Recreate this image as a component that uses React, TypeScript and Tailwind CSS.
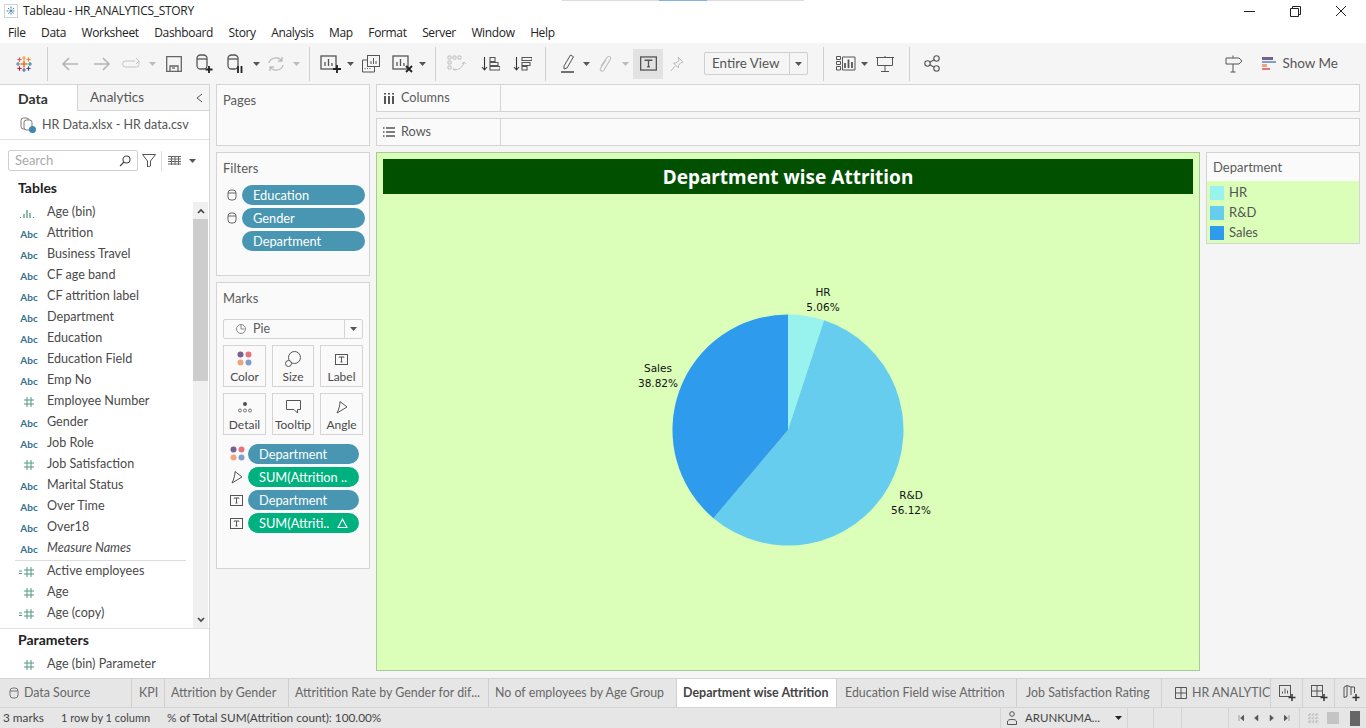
import React from "react";

const S = ({ w = 24, h = 24, vb, c = "#555", sw = 1.3, children, className = "" }: any) => (
  <svg width={w} height={h} viewBox={vb || `0 0 ${w} ${h}`} fill="none" stroke={c} strokeWidth={sw} className={"shrink-0 " + className}>
    {children}
  </svg>
);

const Caret = ({ c = "#555" }: { c?: string }) => (
  <svg width="7" height="4" viewBox="0 0 7 4" className="shrink-0"><path d="M0 0h7L3.5 4z" fill={c} /></svg>
);

const Cross = ({ x, y, r, c, t = 1.2 }: any) => (
  <path d={`M${x - r} ${y}H${x + r}M${x} ${y - r}V${y + r}`} stroke={c} strokeWidth={t} fill="none" />
);

const TabLogo = ({ size = 18 }: { size?: number }) => (
  <svg width={size} height={size} viewBox="0 0 18 18" className="shrink-0">
    <Cross x={9} y={9} r={3.5} c="#e8762b" t={1.6} />
    <Cross x={9} y={3} r={2} c="#e8a33b" />
    <Cross x={9} y={15} r={2} c="#4a6fa5" />
    <Cross x={3} y={9} r={2} c="#59879b" />
    <Cross x={15} y={9} r={2} c="#2d8ca8" />
    <Cross x={4.5} y={4.5} r={2.2} c="#e15759" />
    <Cross x={13.5} y={4.5} r={2.2} c="#eb912b" />
    <Cross x={4.5} y={13.5} r={2.2} c="#c72035" />
    <Cross x={13.5} y={13.5} r={2.2} c="#5b4a8b" />
  </svg>
);

const Cyl = ({ c = "#666" }: { c?: string }) => (
  <svg width="10" height="12" viewBox="0 0 10 12" fill="none" stroke={c} strokeWidth="1" className="shrink-0">
    <rect x="1" y="1" width="8" height="10" rx="3" />
    <path d="M1 4h8" />
  </svg>
);

const Hash = ({ eq = false }: { eq?: boolean }) => (
  <svg width="20" height="12" viewBox="0 0 20 12" fill="none" stroke="#4f9a84" strokeWidth="1" className="shrink-0">
    {eq && <path d="M1 5h3M1 7.5h3" />}
    <path d="M9 1v10M13 1v10M6 4h10M6 8h10" />
  </svg>
);

const Abc = () => (
  <span className="w-[22px] text-[10px] font-bold leading-none text-[#33718c] text-center shrink-0">Abc</span>
);

const BarsIcon = () => (
  <svg width="18" height="12" viewBox="0 0 18 12" fill="none" stroke="#4f9a84" strokeWidth="1.3" className="shrink-0">
    <path d="M2.5 10v1M6 7v4M9 3v8M12 6v5M15.5 10v1" />
  </svg>
);

type F = { n: string; t: "abc" | "hash" | "eq" | "bin"; i?: boolean };
const fields: F[] = [
  { n: "Age (bin)", t: "bin" },
  { n: "Attrition", t: "abc" },
  { n: "Business Travel", t: "abc" },
  { n: "CF age band", t: "abc" },
  { n: "CF attrition label", t: "abc" },
  { n: "Department", t: "abc" },
  { n: "Education", t: "abc" },
  { n: "Education Field", t: "abc" },
  { n: "Emp No", t: "abc" },
  { n: "Employee Number", t: "hash" },
  { n: "Gender", t: "abc" },
  { n: "Job Role", t: "abc" },
  { n: "Job Satisfaction", t: "hash" },
  { n: "Marital Status", t: "abc" },
  { n: "Over Time", t: "abc" },
  { n: "Over18", t: "abc" },
  { n: "Measure Names", t: "abc", i: true },
];
const measures: F[] = [
  { n: "Active employees", t: "eq" },
  { n: "Age", t: "hash" },
  { n: "Age (copy)", t: "eq" },
];

const FieldRow = ({ f }: { f: F }) => (
  <div className="h-[21px] flex items-center text-[12.6px] text-[#4a4a4a]">
    <div className="w-[47px] pl-[18px] flex items-center shrink-0">
      {f.t === "abc" && <Abc />}
      {f.t === "bin" && <BarsIcon />}
      {f.t === "hash" && <Hash />}
      {f.t === "eq" && <Hash eq />}
    </div>
    <span className={f.i ? "italic" : ""}>{f.n}</span>
  </div>
);

const Dots = () => (
  <svg width="16" height="16" viewBox="0 0 16 16" className="shrink-0">
    <circle cx="3.5" cy="3.5" r="3" fill="#75608f" />
    <circle cx="11.5" cy="3.5" r="3" fill="#e8717f" />
    <circle cx="3.5" cy="11.5" r="3" fill="#f2a37c" />
    <circle cx="11.5" cy="11.5" r="3" fill="#7e9fc9" />
  </svg>
);

const TBox = ({ w = 13, h = 11 }: { w?: number; h?: number }) => (
  <svg width={w} height={h} viewBox="0 0 13 11" fill="none" stroke="#555" strokeWidth="1" className="shrink-0">
    <rect x="0.5" y="0.5" width="12" height="10" />
    <path d="M4 3.5V3h5v.5M6.5 3v5M5.5 8h2" />
  </svg>
);

const AngleIcon = () => (
  <svg width="12" height="14" viewBox="0 0 12 14" fill="none" stroke="#555" strokeWidth="1" className="shrink-0">
    <path d="M1 13C3 9 4 5 4 1.500L11 7z" />
  </svg>
);

const MarkBtn = ({ w, label, icon }: any) => (
  <div className={"h-[42px] border border-[#d4d4d4] bg-[#fafafa] flex flex-col items-center justify-between pt-[5px] pb-[2px] text-[12px] leading-[14px] text-[#4a4a4a] " + w}>
    <div className="h-[16px] flex items-center">{icon}</div>
    <span>{label}</span>
  </div>
);

const Pill = ({ children, green = false, w }: any) => (
  <div className={"h-[20px] rounded-full flex items-center pl-[11px] text-[12.8px] text-white shrink-0 " + w + (green ? " bg-[#00b180]" : " bg-[#4996b2]")}>
    {children}
  </div>
);

const Sep = ({ cls }: { cls: string }) => <div className={"w-px h-[34px] bg-[#cfcfcf] shrink-0 " + cls} />;

const Cell = ({ cls, children }: any) => (
  <div className={"h-[30px] flex items-center justify-center shrink-0 " + cls}>{children}</div>
);

const Tab = ({ w, children }: any) => (
  <div className={"h-full flex items-center whitespace-nowrap overflow-hidden shrink-0 border-r border-[#cfcfcf] pl-[6px] text-[#666] " + w}>
    {children}
  </div>
);

const SheetPlus = ({ kind }: { kind: number }) => (
  <svg width="18" height="18" viewBox="0 0 18 18" fill="none" stroke="#555" strokeWidth="1">
    {kind === 0 && <><rect x="1.5" y="1.5" width="11" height="11" /><path d="M4.5 9.5v-2M7 9.5v-5M9.5 9.5v-3" /></>}
    {kind === 1 && <><rect x="1.5" y="1.5" width="11" height="11" /><path d="M7 1.5v11M1.5 7h11" /></>}
    {kind === 2 && <path d="M2 3l3-1.5v11l-3 1zM5 1.5l4 1.5h3.5v6M9 3v8" />}
    <path d="M14 10v7M10.5 13.5h7" strokeWidth="1.5" stroke="#333" />
  </svg>
);

const ShelfRow = ({ label, icon }: any) => (
  <div className="h-[28px] bg-[#fafafa] border border-[#d4d4d4] flex">
    <div className="w-[124px] border-r border-[#d4d4d4] flex items-center pl-[6px] gap-[6px] text-[12.7px] text-[#5a5a5a]">
      {icon}
      <span>{label}</span>
    </div>
  </div>
);

export default function App() {
  return (
    <div className="relative w-[1366px] h-[728px] overflow-hidden flex flex-col bg-[#f5f5f5] font-['Lato','Liberation_Sans',sans-serif]">
      <div className="absolute top-0 left-[562px] w-[242px] h-px bg-[#dcdcdc]">
        <div className="ml-[97px] w-[48px] h-px bg-[#7fb2e5]" />
      </div>

      {/* title bar */}
      <div className="h-[22px] bg-white flex items-center shrink-0 pl-[4px] font-['Open_Sans',sans-serif] text-[12px] text-[#222]">
        <svg width="14" height="14" viewBox="0 0 14 14" fill="none" stroke="#3f7f9f" strokeWidth="1" className="shrink-0">
          <rect x="0.5" y="0.5" width="13" height="13" stroke="#c9d6de" />
          <path d="M7 2.5v9M2.5 7h9M4 4l6 6M10 4l-6 6" strokeDasharray="2 1" />
        </svg>
        <span className="ml-[5px] tracking-[-0.3px]">Tableau - HR_ANALYTICS_STORY</span>
        <div className="ml-auto mr-[2px] flex items-center">
          <div className="w-[46px] flex justify-center"><S w={11} h={11} c="#222" sw={1}><path d="M0 5.5h11" /></S></div>
          <div className="w-[46px] flex justify-center">
            <S w={11} h={11} c="#222" sw={1}><path d="M.5 2.5h8v8h-8zM2.5 2.5v-2h8v8h-2" /></S>
          </div>
          <div className="w-[46px] flex justify-center">
            <S w={12} h={12} c="#222" sw={1}><path d="M1 1l10 10M11 1L1 11" /></S>
          </div>
        </div>
      </div>

      {/* menu */}
      <div className="h-[21px] bg-white flex items-center shrink-0 pl-[8px] gap-[15.5px] tracking-[-0.35px] font-['Open_Sans',sans-serif] text-[12px] text-[#222]">
        {["File", "Data", "Worksheet", "Dashboard", "Story", "Analysis", "Map", "Format", "Server", "Window", "Help"].map((m) => (
          <span key={m}>{m}</span>
        ))}
      </div>

      {/* toolbar */}
      <div className="h-[41px] shrink-0 flex items-center pl-[8px] bg-[#f5f5f5]">
        <Cell cls="w-[32px]"><TabLogo /></Cell>
        <Sep cls="ml-[7px] mr-[6px]" />
        <Cell cls="w-[32px]"><S w={18} h={14} c="#b5b5b5" sw={1.6}><path d="M17 7H2M8 1L2 7l6 6" /></S></Cell>
        <Cell cls="w-[32px]"><S w={18} h={14} c="#b5b5b5" sw={1.6}><path d="M1 7h15M10 1l6 6-6 6" /></S></Cell>
        <Cell cls="w-[28px]"><S w={20} h={12} c="#c4c4c4" sw={1}><path d="M13 3H3.500a2.500 2.500 0 0 0 0 6h11a2.500 2.500 0 0 0 2.500-2.500V3M14 0l3 3-3 3" /></S></Cell>
        <Cell cls="w-[12px]"><Caret c="#bbb" /></Cell>
        <Cell cls="w-[32px]"><S w={16} h={16} c="#666"><path d="M.7.7h14.600v14.600H.7zM4 15v-5h8v5" /><path d="M6 12h3" /></S></Cell>
        <Cell cls="w-[30px]"><S w={18} h={20}><rect x="1" y="1" width="10" height="14" rx="3.500" /><path d="M1 5h10" /><path d="M13 12v7M9.500 15.500h7" stroke="#222" strokeWidth="1.800" /></S></Cell>
        <Cell cls="w-[32px]"><S w={18} h={20}><rect x="1" y="1" width="10" height="14" rx="3.500" /><path d="M1 5h10" /><path d="M11 12v7M14.500 12v7" stroke="#222" strokeWidth="1.800" /></S></Cell>
        <Cell cls="w-[8px]"><Caret /></Cell>
        <Cell cls="w-[32px]"><S w={18} h={16} c="#bbb" sw={1.3}><path d="M2 7a7 6 0 0 1 13-2M16 9A7 6 0 0 1 3 11M15 1v4h-4M3 15v-4h4" /></S></Cell>
        <Cell cls="w-[8px]"><Caret c="#bbb" /></Cell>
        <Sep cls="ml-[9px]" />
        <Cell cls="ml-[5px] w-[32px]"><S w={22} h={20}><rect x="1" y="2" width="15" height="13" /><path d="M5 12V8M8.500 12V5M12 12V9" /><path d="M17 11v8M13 15h8" stroke="#222" strokeWidth="1.800" /></S></Cell>
        <Cell cls="w-[6px]"><Caret /></Cell>
        <Cell cls="ml-[2px] w-[32px]"><S w={18} h={18} sw={1}><rect x="5.500" y=".5" width="12" height="11" /><path d="M9 9V6M11.500 9V3M14 9V6" /><path d="M5.500 5h-5v12h12v-5" /><path d="M3 14v-1M5.500 14v-1M8 14v-1" /></S></Cell>
        <Cell cls="w-[32px]"><S w={22} h={20}><rect x="1" y="2" width="15" height="13" /><path d="M5 12V8M8.500 12V5M12 12V9" /><path d="M14 12l6 6M20 12l-6 6" stroke="#222" strokeWidth="1.800" /></S></Cell>
        <Cell cls="w-[6px]"><Caret /></Cell>
        <Sep cls="ml-[10px]" />
        <Cell cls="ml-[5px] w-[32px]"><S w={20} h={18} c="#c0c0c0" sw={1}><path d="M1 1h3v3H1zM6 1h3v3H6zM11 1h3v3h-3zM1 6h3v3H1zM1 11h3v3H1zM7 15c5 0 9-3 10-8M15 9l2-2 2 2M6 13l1 2 2-1" /></S></Cell>
        <Cell cls="ml-[1px] w-[32px]"><S w={19} h={16} sw={1.100}><path d="M3.500 1v13M1 11l2.500 3L6 11" stroke="#333" /><path d="M9 1.500h5v4H9zM9 6.500h8v3H9zM9 10.500h10v3.500H9z" /></S></Cell>
        <Cell cls="w-[32px]"><S w={19} h={16} sw={1.100}><path d="M3.500 1v13M1 11l2.500 3L6 11" stroke="#333" /><path d="M9 1.500h10v3H9zM9 6.500h8v3H9zM9 10.500h5v3.500H9z" /></S></Cell>
        <Sep cls="ml-[7px]" />
        <Cell cls="ml-[7px] w-[30px]"><S w={14} h={19} sw={1}><path d="M3 12L9.500 1l3 1.800L6 14l-3 1z" /><path d="M0 18h13" stroke="#444" strokeWidth="1.500" /></S></Cell>
        <Cell cls="w-[6px]"><Caret /></Cell>
        <Cell cls="w-[32px]"><S w={14} h={18} c="#c0c0c0" sw={1.200}><path d="M3 11l6-8.500c1.500-2 4.500-.5 3.500 1.500L6 15c-1.500 2-4.500 1-3.500-1.500L8 5" /></S></Cell>
        <Cell cls="w-[8px]"><Caret c="#bbb" /></Cell>
        <Cell cls="ml-[4px] w-[30px] bg-[#e2e2e2]"><TBox w={17} h={15} /></Cell>
        <Cell cls="w-[28px]"><S w={14} h={16} c="#bbb" sw={1}><path d="M8 1l5 5-2 .5-2.500 3 0 2.500L3.500 7H6l3-2.500zM5.500 9.500L1 15" /></S></Cell>
        <div className="ml-[13px] w-[104px] h-[23px] shrink-0 rounded-[2px] border border-[#cfcfcf] flex items-center text-[13.4px] text-[#555]">
          <span className="w-[85px] pl-[7px] border-r border-[#cfcfcf] h-full flex items-center">Entire View</span>
          <span className="flex-1 flex justify-center"><Caret /></span>
        </div>
        <Sep cls="ml-[15px]" />
        <Cell cls="ml-[7px] w-[30px]"><S w={20} h={15} sw={1}><path d="M.5.500h4v3h-4zM.5 5.500h4v3h-4zM.5 10.500h4v3.500h-4zM6.500 1h12.500v13H6.500z" /><path d="M9 12V7M12.500 12V3.500M16 12V6" strokeWidth="1.800" /></S></Cell>
        <Cell cls="w-[6px]"><Caret /></Cell>
        <Cell cls="ml-[2px] w-[32px]"><S w={18} h={16} sw={1}><path d="M0 1.500h18M1.500 1.500h15v8h-15zM9 9.500v6M5 15.500h8M9 0v1.500" /></S></Cell>
        <Sep cls="ml-[8px]" />
        <Cell cls="ml-[6px] w-[32px]"><S w={16} h={17} sw={1.100}><circle cx="3.500" cy="8.500" r="2.700" /><circle cx="12.500" cy="3.500" r="2.700" /><circle cx="12.500" cy="13.500" r="2.700" /><path d="M6 7.200l4-2.400M6 9.800l4 2.400" /></S></Cell>
        <div className="ml-auto flex items-center">
          <S w={18} h={18} sw={1}><path d="M1 3h13l3 3-3 3H1zM8 .5V3M8 9v8M5.500 17h5" /></S>
          <div className="ml-[19px] flex flex-col gap-px shrink-0">
            <div className="w-[11px] h-[2.500px] bg-[#75608f]" />
            <div className="w-[14px] h-[2.500px] bg-[#7e9fc9]" />
            <div className="w-[5px] h-[2.500px] bg-[#f2a37c]" />
            <div className="w-[8px] h-[2.500px] bg-[#e8717f]" />
          </div>
          <span className="ml-[6px] mr-[28px] text-[13.500px] text-[#555]">Show Me</span>
        </div>
      </div>

      {/* main */}
      <div className="flex-1 min-h-0 flex">
        {/* data pane */}
        <div className="w-[210px] shrink-0 bg-white border-r border-t border-[#d4d4d4] flex flex-col">
          <div className="h-[26px] flex shrink-0 text-[14px]">
            <div className="w-[77px] flex items-center pl-[18px] font-bold text-[#333]">Data</div>
            <div className="flex-1 bg-[#f5f5f5] border-l border-b border-[#d4d4d4] flex items-center pl-[12px] text-[13.500px] text-[#555]">
              <span>Analytics</span>
              <S w={7} h={10} c="#555" sw={1} className="ml-auto mr-[6px]"><path d="M6 1L1 5l5 4" /></S>
            </div>
          </div>
          <div className="h-[29px] shrink-0 border-b border-[#e2e2e2] flex items-center pl-[20px] pt-px gap-[5px] text-[12.500px] text-[#555]">
            <svg width="17" height="17" viewBox="0 0 17 17" fill="none" stroke="#777" strokeWidth="1" className="shrink-0">
              <rect x="1" y="1" width="8" height="11" rx="2.500" /><rect x="4" y="3" width="8" height="10" rx="2.500" fill="#fff" />
              <circle cx="12.500" cy="12.500" r="3.500" fill="#3f86b0" stroke="none" />
            </svg>
            <span>HR Data.xlsx - HR data.csv</span>
          </div>
          <div className="h-[21px] mt-[10px] shrink-0 flex items-center pl-[8px]">
            <div className="w-[130px] h-[21px] rounded-[2px] border border-[#cfcfcf] flex items-center justify-between px-[6px] text-[13px] text-[#aaa]">
              <span>Search</span>
              <S w={12} h={12} c="#444" sw={1.100}><circle cx="7.500" cy="4.500" r="3.500" /><path d="M5 7l-4 4" /></S>
            </div>
            <S w={14} h={13} c="#555" sw={1} className="ml-[4px]"><path d="M.5.500h13L8.500 7v5l-3 1V7z" /></S>
            <div className="w-px h-[20px] bg-[#ddd] ml-[5px]" />
            <S w={13} h={9} c="#666" sw={1} className="ml-[6px]"><path d="M0 .500h13M0 3h13M0 5.500h13M0 8h13M3.500 0v9M7 0v9M10.500 0v9" /></S>
            <span className="ml-[8px] flex"><Caret /></span>
          </div>
          <div className="h-[31px] shrink-0 pl-[18px] pt-[1px] flex items-center text-[14px] font-bold text-[#222]">Tables</div>
          <div className="flex-1 min-h-0 flex">
            <div className="flex-1 min-w-0">
              {fields.map((f) => <FieldRow key={f.n} f={f} />)}
              <div className="h-px bg-[#ddd] ml-[15px] mr-[7px] mt-[1px]" />
              {measures.map((f) => <FieldRow key={f.n} f={f} />)}
            </div>
            <div className="w-[15px] mr-px shrink-0 bg-[#f0f0f0] flex flex-col items-center">
              <div className="h-[17px] flex items-center"><S w={8} h={6} c="#444" sw={1.600}><path d="M1 5l3-3 3 3" /></S></div>
              <div className="w-full h-[162px] bg-[#cdcdcd]" />
              <div className="mt-auto h-[16px] flex items-center"><S w={8} h={6} c="#444" sw={1.600}><path d="M1 1l3 3 3-3" /></S></div>
            </div>
          </div>
          <div className="h-[50px] shrink-0 border-t border-[#e2e2e2] flex flex-col">
            <div className="h-[21px] pl-[18px] flex items-end text-[14px] font-bold text-[#222]">Parameters</div>
            <div className="mt-[4px]"><FieldRow f={{ n: "Age (bin) Parameter", t: "hash" }} /></div>
          </div>
        </div>

        {/* shelf cards */}
        <div className="w-[160px] ml-[6px] shrink-0 flex flex-col gap-[6px]">
          <div className="h-[62px] bg-[#fafafa] border border-[#d4d4d4] pl-[6px] pt-[7px] text-[13px] leading-[16px] text-[#5a5a5a] w-[154px]">Pages</div>
          <div className="h-[124px] w-[154px] bg-[#fafafa] border border-[#d4d4d4] pl-[6px] pt-[7px] text-[13px] leading-[16px] text-[#5a5a5a]">
            <div>Filters</div>
            <div className="mt-[9px] flex flex-col gap-[3px]">
              <div className="flex items-center"><div className="w-[19px] pl-[4px]"><Cyl /></div><Pill w="w-[123px]">Education</Pill></div>
              <div className="flex items-center"><div className="w-[19px] pl-[4px]"><Cyl /></div><Pill w="w-[123px]">Gender</Pill></div>
              <div className="flex items-center"><div className="w-[19px]" /><Pill w="w-[123px]">Department</Pill></div>
            </div>
          </div>
          <div className="h-[287px] w-[154px] bg-[#fafafa] border border-[#d4d4d4] pl-[6px] pt-[7px] text-[13px] leading-[16px] text-[#5a5a5a]">
            <div>Marks</div>
            <div className="mt-[13px] w-[140px] h-[20px] border border-[#d4d4d4] rounded-[2px] flex items-center text-[12.500px]">
              <div className="w-[121px] h-full flex items-center pl-[12px] gap-[7px] border-r border-[#d4d4d4]">
                <S w={10} h={10} c="#888" sw={1}><circle cx="5" cy="5" r="4.500" /><path d="M5 1v4h3.500" /></S>
                <span>Pie</span>
              </div>
              <span className="flex-1 flex justify-center"><Caret /></span>
            </div>
            <div className="mt-[6px] flex gap-[6px]">
              <MarkBtn w="w-[43px]" label="Color" icon={<Dots />} />
              <MarkBtn w="w-[42px]" label="Size" icon={<S w={16} h={16} c="#555" sw={1}><circle cx="9.500" cy="6.500" r="6" /><circle cx="3.500" cy="12.500" r="3" fill="#fafafa" /></S>} />
              <MarkBtn w="w-[43px]" label="Label" icon={<TBox />} />
            </div>
            <div className="mt-[6px] flex gap-[6px]">
              <MarkBtn w="w-[43px]" label="Detail" icon={<S w={14} h={11} c="#555" sw={.8}><circle cx="7" cy="2" r="1.700" fill="#555" /><circle cx="2" cy="8.500" r="1.500" /><circle cx="7" cy="8.500" r="1.500" /><circle cx="12" cy="8.500" r="1.500" /></S>} />
              <MarkBtn w="w-[42px]" label="Tooltip" icon={<S w={15} h={14} c="#555" sw={1}><path d="M.5.500h14v9h-3v3.500l-3.500-3.500H.5z" /></S>} />
              <MarkBtn w="w-[43px]" label="Angle" icon={<AngleIcon />} />
            </div>
            <div className="mt-[9px] flex flex-col gap-[3px]">
              <div className="flex items-center"><div className="w-[25px] pl-[7px]"><Dots /></div><Pill w="w-[111px]">Department</Pill></div>
              <div className="flex items-center"><div className="w-[25px] pl-[8px]"><AngleIcon /></div><Pill w="w-[111px]" green>SUM(Attrition ..</Pill></div>
              <div className="flex items-center"><div className="w-[25px] pl-[7px]"><TBox /></div><Pill w="w-[111px]">Department</Pill></div>
              <div className="flex items-center"><div className="w-[25px] pl-[7px]"><TBox /></div>
                <Pill w="w-[111px]" green>SUM(Attriti..<span className="ml-[8px]">
                  <S w={11} h={10} c="#fff" sw={1.100}><path d="M5.500 1L10 9.500H1z" /></S></span></Pill>
              </div>
            </div>
          </div>
        </div>

        {/* right */}
        <div className="flex-1 min-w-0 flex flex-col pr-[6px] gap-[6px]">
          <ShelfRow label="Columns" icon={<S w={12} h={11} c="#555" sw={2}><path d="M2 3v8M6 3v8M10 3v8M2 0v1.500M6 0v1.500M10 0v1.500" /></S>} />
          <ShelfRow label="Rows" icon={<S w={12} h={10} c="#555" sw={1.400}><path d="M3 1h9M3 5h9M3 9h9M0 1h1.500M0 5h1.500M0 9h1.500" /></S>} />
          <div className="flex gap-[6px]">
            <div className="w-[824px] h-[519px] shrink-0 bg-[#dbffb9] border border-[#a9c99a] pl-[6px] pt-[6px] font-['DejaVu_Sans',sans-serif]">
              <div className="h-[35px] w-[810px] bg-[#005000] pt-px text-white text-[19px] font-bold font-['Noto_Sans',sans-serif] flex items-center justify-center">
                Department wise Attrition
              </div>
              <svg width="810" height="471" viewBox="0 0 810 471" className="block">
                <path d="M405 236V120.500A115.500 115.500 0 0 1 441.100 126.300Z" fill="#98f3ef" />
                <path d="M405 236L441.100 126.300A115.500 115.500 0 1 1 330.400 324.200Z" fill="#67cdee" />
                <path d="M405 236L330.400 324.200A115.500 115.500 0 0 1 405 120.500Z" fill="#2e9bec" />
                <g fontSize="10.500" fill="#111" textAnchor="middle">
                  <text x="440" y="102">HR</text>
                  <text x="440" y="117">5.06%</text>
                  <text x="275" y="178">Sales</text>
                  <text x="275" y="193">38.82%</text>
                  <text x="528" y="305">R&amp;D</text>
                  <text x="528" y="320">56.12%</text>
                </g>
              </svg>
            </div>
            <div className="w-[154px] h-[92px] shrink-0 border border-[#d4d4d4] flex flex-col">
              <div className="h-[29px] bg-[#fafafa] flex items-center pl-[6px] pt-[2px] text-[13px] text-[#5a5a5a]">Department</div>
              <div className="flex-1 bg-[#dbffb9] pl-[3px] pt-[2px] text-[13px] text-[#555]">
                {[["HR", "bg-[#98f3ef]"], ["R&D", "bg-[#67cdee]"], ["Sales", "bg-[#2e9bec]"]].map(([t, c]) => (
                  <div key={t} className="h-[20px] flex items-center gap-[5px]">
                    <div className={"w-[14px] h-[14px] " + c} />
                    <span>{t}</span>
                  </div>
                ))}
              </div>
            </div>
          </div>
        </div>
      </div>

      {/* tabs */}
      <div className="h-[29px] shrink-0 bg-[#e6e6e6] border-t border-[#d4d4d4] flex text-[12.400px]">
        <Tab w="w-[132px]"><span className="ml-[3px] flex"><Cyl c="#777" /></span><span className="ml-[5px]">Data Source</span></Tab>
        <Tab w="w-[33px]"><span className="ml-[1px]">KPI</span></Tab>
        <Tab w="w-[124px]">Attrition by Gender</Tab>
        <Tab w="w-[200px]">Attritition Rate by Gender for dif...</Tab>
        <Tab w="w-[188px]">No of employees by Age Group</Tab>
        <div className="w-[160px] h-full flex items-center whitespace-nowrap shrink-0 bg-white border-r border-[#cfcfcf] pl-[6px] font-bold text-[12.500px] text-[#444]">Department wise Attrition</div>
        <Tab w="w-[180px]"><span className="ml-[2px]">Education Field wise Attrition</span></Tab>
        <Tab w="w-[145px]"><span className="ml-[3px]">Job Satisfaction Rating</span></Tab>
        <Tab w="w-[109px]">
          <S w={12} h={12} c="#555" sw={1} className="ml-[7px] mr-[5px]"><path d="M.5.500h11v11H.500zM6 .5v11M.5 6h11" /></S>
          <span>HR ANALYTIC</span>
        </Tab>
        <div className="w-[32px] h-full border-r border-[#cfcfcf] flex items-center justify-center shrink-0"><SheetPlus kind={0} /></div>
        <div className="w-[32px] h-full border-r border-[#cfcfcf] flex items-center justify-center shrink-0"><SheetPlus kind={1} /></div>
        <div className="flex-1 flex items-center justify-center"><SheetPlus kind={2} /></div>
      </div>

      {/* status */}
      <div className="h-[21px] shrink-0 bg-[#e6e6e6] border-t border-[#d4d4d4] flex items-center text-[11.800px] text-[#444]">
        <span className="w-[61px] pl-[3px]">3 marks</span>
        <span className="w-[106px] text-[11px]">1 row by 1 column</span>
        <span className="w-[833px]">% of Total SUM(Attrition count): 100.00%</span>
        <div className="w-[127px] h-full border-l border-[#d4d4d4] flex items-center pl-[6px] gap-[8px] text-[11.500px]">
          <S w={10} h={14} c="#555" sw={1}><circle cx="5" cy="3" r="2.300" /><path d="M.5 13.500v-2.500c0-2 1.500-2.500 4.500-2.500s4.500.5 4.500 2.500v2.500z" /></S>
          <span>ARUNKUMA...</span>
          <span className="ml-[7px] flex"><Caret c="#222" /></span>
        </div>
        <div className="w-[26px] h-full border-l border-[#d4d4d4]" />
        <div className="w-[28px] h-full border-l border-[#d4d4d4]" />
        <div className="w-[47px] h-full border-l border-[#d4d4d4]" />
        <div className="w-[71px] h-full border-l border-[#d4d4d4] flex items-center justify-around px-[4px]">
          {["M1 1v6M6 1L2.500 4 6 7z", "M5 1L1.500 4 5 7z", "M1 1l3.500 3L1 7z", "M5 1v6M0 1l3.500 3L0 7z"].map((d) => (
            <svg key={d} width="6" height="8" viewBox="0 0 6 8" fill="#555" stroke="#555" strokeWidth=".5" className="shrink-0"><path d={d} /></svg>
          ))}
        </div>
        <div className="flex-1 h-full border-l border-[#d4d4d4] flex items-center pl-[8px] gap-[8px]">
          <S w={11} h={11} c="#c4c4c4" sw={1.500}><path d="M0 2h11M0 5.500h11M0 9h11M2 0v11M5.500 0v11M9 0v11" strokeDasharray="2 1.500" /></S>
          <div className="w-[12px] h-[12px] bg-[#c4c4c4]" />
          <div className="w-[10px] h-[15px] bg-[#666] ml-[3px]" />
        </div>
      </div>
    </div>
  );
}
